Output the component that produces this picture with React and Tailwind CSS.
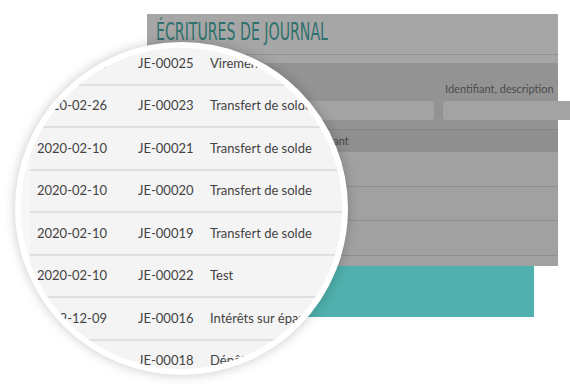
import React from 'react';

const rows = [
  { date: '2020-02-26', id: 'JE-00025', desc: 'Virement entre comptes' },
  { date: '2020-02-26', id: 'JE-00023', desc: 'Transfert de solde' },
  { date: '2020-02-10', id: 'JE-00021', desc: 'Transfert de solde' },
  { date: '2020-02-10', id: 'JE-00020', desc: 'Transfert de solde' },
  { date: '2020-02-10', id: 'JE-00019', desc: 'Transfert de solde' },
  { date: '2020-02-10', id: 'JE-00022', desc: 'Test' },
  { date: '2019-12-09', id: 'JE-00016', desc: 'Intérêts sur épargne' },
  { date: '2019-12-09', id: 'JE-00018', desc: 'Dépôt initial' },
];

function App() {
  return (
    <div className="relative w-[570px] h-[390px] bg-white overflow-hidden font-['Lato',sans-serif]">
      {/* page behind the loupe */}
      <div className="pt-[14px] pl-[147px]">
        <div className="w-[411px] bg-[#a6a6a6]">
          <div className="h-[41px] ml-[9px] border-b border-dotted border-[#7e7e7e] pt-[3px]">
            <h1 className="inline-block origin-left scale-x-[0.655] font-['DejaVu_Sans_Condensed',sans-serif] text-[24px] leading-[30px] text-[#2f716d] whitespace-nowrap">
              ÉCRITURES DE JOURNAL
            </h1>
          </div>
          <div className="h-[8px]" />
          <div className="h-[66px] bg-[#939393] flex items-end gap-[9px] pl-[100px] pb-[9px]">
            <div className="flex flex-col">
              <label className="text-[11px] leading-[14px] text-[#4b4b4b] mb-[5px]">Date</label>
              <div className="w-[187px] h-[19px] rounded-[3px] bg-[#a3a3a3]" />
            </div>
            <div className="flex flex-col">
              <label className="text-[11px] leading-[14px] text-[#4b4b4b] mb-[5px] pl-[2px]">Identifiant, description</label>
              <div className="w-[130px] h-[19px] rounded-l-[3px] bg-[#a3a3a3]" />
            </div>
          </div>
          <div className="h-[23px] bg-[#8f8f8f] border-t border-[#858585] flex items-center pl-[160px] text-[11px] text-[#444]">
            Montant
          </div>
          <div className="h-[35px] bg-[#a1a1a1] border-b border-[#8f8f8f]" />
          <div className="h-[34px] bg-[#a1a1a1] border-b border-[#8f8f8f]" />
          <div className="h-[35px] bg-[#a1a1a1] border-b border-[#8f8f8f]" />
          <div className="h-[10px] bg-[#a1a1a1]" />
        </div>
        <div className="w-[387px] h-[51px] bg-[#4fb0ad]" />
      </div>

      {/* magnifier */}
      <div className="absolute left-[15px] top-[42px] w-[333px] h-[333px] rounded-full border-[6px] border-white bg-[#f7f7f7] overflow-hidden shadow-[0_0_12px_rgba(0,0,0,0.22)]">
        <div className="ml-[9px] -mt-[5px] w-[330px] bg-[#f4f4f4]">
          {rows.map((r) => (
            <div key={r.id} className="h-[42.5px] flex items-center border-b-2 border-[#e0e0e0] text-[13px] text-[#434343] whitespace-nowrap">
              <div className="w-[108px] pl-[7px]">{r.date}</div>
              <div className="w-[72px]">{r.id}</div>
              <div>{r.desc}</div>
            </div>
          ))}
        </div>
      </div>
    </div>
  );
}

export default App;
